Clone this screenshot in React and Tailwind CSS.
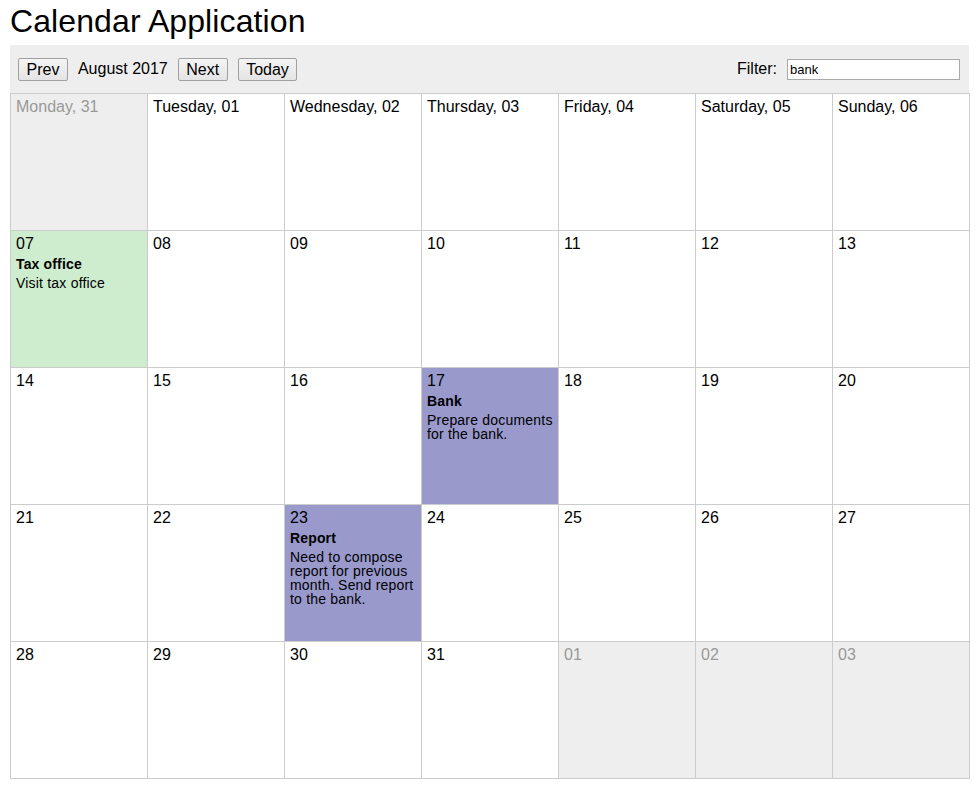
import React, { useState } from 'react';

// Calendar grid for August 2017, weeks start on Monday
const weeks = [
  [
    { label: 'Monday, 31', other: true },
    { label: 'Tuesday, 01' },
    { label: 'Wednesday, 02' },
    { label: 'Thursday, 03' },
    { label: 'Friday, 04' },
    { label: 'Saturday, 05' },
    { label: 'Sunday, 06' },
  ],
  [
    { label: '07', event: { title: 'Tax office', text: 'Visit tax office', color: 'green' } },
    { label: '08' },
    { label: '09' },
    { label: '10' },
    { label: '11' },
    { label: '12' },
    { label: '13' },
  ],
  [
    { label: '14' },
    { label: '15' },
    { label: '16' },
    { label: '17', event: { title: 'Bank', text: 'Prepare documents for the bank.', color: 'purple' } },
    { label: '18' },
    { label: '19' },
    { label: '20' },
  ],
  [
    { label: '21' },
    { label: '22' },
    { label: '23', event: { title: 'Report', text: 'Need to compose report for previous month. Send report to the bank.', color: 'purple' } },
    { label: '24' },
    { label: '25' },
    { label: '26' },
    { label: '27' },
  ],
  [
    { label: '28' },
    { label: '29' },
    { label: '30' },
    { label: '31' },
    { label: '01', other: true },
    { label: '02', other: true },
    { label: '03', other: true },
  ],
];

const cellBg = (day) => {
  if (day.other) return 'bg-[#eeeeee] text-[#999999]';
  if (day.event && day.event.color === 'green') return 'bg-[#ceedce] text-black';
  if (day.event && day.event.color === 'purple') return 'bg-[#9999cc] text-black';
  return 'bg-white text-black';
};

const Button = ({ children }) => (
  <button className="h-[23px] px-[7.5px] border border-[#a0a0a0] rounded-[2px] bg-gradient-to-b from-[#f4f4f4] to-[#e4e4e4] text-[16px] leading-[19px] text-black">
    {children}
  </button>
);

const App = () => {
  const [filter, setFilter] = useState('bank');

  return (
    <div className="px-[10px] font-['Liberation_Sans',Arial,sans-serif] text-black">
      <h1 className="pt-[3px] h-[45px] text-[32px] leading-[37px] font-normal tracking-[0.1px]">Calendar Application</h1>

      {/* Toolbar */}
      <div className="flex items-center justify-between h-[48px] px-[8px] bg-[#eeeeee] text-[16px]">
        <div className="flex items-center gap-[10px]">
          <Button>Prev</Button>
          <span>August 2017</span>
          <Button>Next</Button>
          <Button>Today</Button>
        </div>
        <div className="flex items-center gap-[10px] pr-px">
          <span>Filter:</span>
          <input
            type="text"
            value={filter}
            onChange={(e) => setFilter(e.target.value)}
            className="w-[173px] h-[21px] px-[2px] border border-[#a9a9a9] bg-white text-[13px] leading-[15px] outline-none"
          />
        </div>
      </div>

      {/* Month grid */}
      <div className="w-[960px] border-l border-t border-[#cccccc]">
        {weeks.map((week, wi) => (
          <div key={wi} className="grid grid-cols-[repeat(7,137px)]">
            {week.map((day, di) => (
              <div
                key={di}
                className={`h-[137px] border-r border-b border-[#cccccc] pl-[5px] pr-[3px] pt-[3px] ${cellBg(day)}`}
              >
                <div className="text-[16px] leading-[19px]">{day.label}</div>
                {day.event && (
                  <div>
                    <div className="mt-[3px] text-[14px] leading-[16px] font-bold tracking-[0.15px]">{day.event.title}</div>
                    <div className="mt-[4px] text-[14px] leading-[14px] tracking-[0.2px]">{day.event.text}</div>
                  </div>
                )}
              </div>
            ))}
          </div>
        ))}
      </div>
    </div>
  );
};

export default App;
